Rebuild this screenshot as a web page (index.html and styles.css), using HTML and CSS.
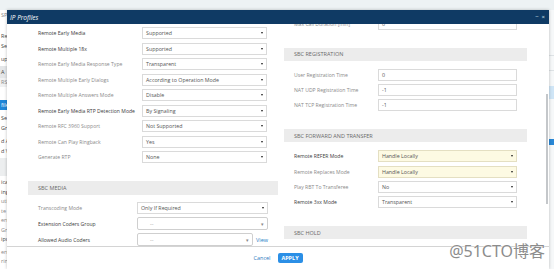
FILE: index.html
```html
<!DOCTYPE html>
<html lang="en">
<head>
    <meta charset="UTF-8">
    <meta name="viewport" content="width=device-width, initial-scale=1.0">
    <title>IP Profiles</title>
    <link rel="stylesheet" href="styles.css">
</head>
<body>
    <!-- Page behind the dialog -->
    <div class="page">
        <div class="topbar"></div>
        <div class="page-main">
            <ul class="side-menu">
                <li class="muted">SP</li>
                <li class="gap-lg"></li>
                <li>Re</li>
                <li>Set</li>
                <li class="mt3">up:</li>
                <li class="boxed mt2">A</li>
                <li class="light muted">RS</li>
                <li class="gap-md"></li>
                <li class="active">file</li>
                <li class="mt3">Se</li>
                <li>Gr</li>
                <li class="mt3">d A</li>
                <li>d V</li>
                <li class="block mt2"></li>
                <li class="sm mt2">ica</li>
                <li class="sm">ing</li>
                <li class="sm muted">uti</li>
                <li class="sm muted">te</li>
                <li class="sm muted">ern</li>
                <li class="sm muted">Gro</li>
                <li class="sm">ipu</li>
                <li class="sm muted mt3">ern</li>
                <li class="sm muted">rin</li>
            </ul>
            <div class="page-right">
                <div class="right-line"></div>
                <div class="right-line"></div>
                <div class="right-box"></div>
                <div class="right-btn"></div>
            </div>
        </div>
    </div>

    <!-- IP Profiles dialog -->
    <div class="modal">
        <div class="modal-head">
            <span class="modal-title">IP Profiles</span>
            <span class="modal-tools"><span>&minus;</span><span>&times;</span></span>
        </div>

        <div class="modal-body">
            <div class="col col-left">
                <div class="group early">
                    <div class="row"><span class="label strong">Remote Early Media</span><div class="select"><span>Supported</span><i class="caret"></i></div></div>
                    <div class="row"><span class="label strong">Remote Multiple 18x</span><div class="select"><span>Supported</span><i class="caret"></i></div></div>
                    <div class="row"><span class="label">Remote Early Media Response Type</span><div class="select"><span>Transparent</span><i class="caret"></i></div></div>
                    <div class="row"><span class="label">Remote Multiple Early Dialogs</span><div class="select"><span>According to Operation Mode</span><i class="caret"></i></div></div>
                    <div class="row"><span class="label">Remote Multiple Answers Mode</span><div class="select"><span>Disable</span><i class="caret"></i></div></div>
                    <div class="row"><span class="label strong">Remote Early Media RTP Detection Mode</span><div class="select"><span>By Signaling</span><i class="caret"></i></div></div>
                    <div class="row"><span class="label">Remote RFC 3960 Support</span><div class="select"><span>Not Supported</span><i class="caret"></i></div></div>
                    <div class="row"><span class="label">Remote Can Play Ringback</span><div class="select"><span>Yes</span><i class="caret"></i></div></div>
                    <div class="row"><span class="label">Generate RTP</span><div class="select"><span>None</span><i class="caret"></i></div></div>
                </div>

                <div class="section-head">SBC MEDIA</div>
                <div class="group media">
                    <div class="row"><span class="label">Transcoding Mode</span><div class="select"><span>Only If Required</span><i class="caret"></i></div></div>
                    <div class="row"><span class="label strong">Extension Coders Group</span><div class="select multi"><span>--</span><i class="chevron">&#9662;</i></div></div>
                    <div class="row"><span class="label strong">Allowed Audio Coders</span><div class="coder-pick"><div class="select multi"><span>--</span><i class="chevron">&#9662;</i></div><a class="view-link">View</a></div></div>
                </div>
            </div>

            <div class="col col-right">
                <div class="group reg">
                    <div class="row"><span class="label">Max Call Duration [min]</span><div class="select input"><span>0</span></div></div>
                </div>

                <div class="section-head">SBC REGISTRATION</div>
                <div class="group reg">
                    <div class="row"><span class="label">User Registration Time</span><div class="select input"><span>0</span></div></div>
                    <div class="row"><span class="label">NAT UDP Registration Time</span><div class="select input"><span>-1</span></div></div>
                    <div class="row"><span class="label">NAT TCP Registration Time</span><div class="select input"><span>-1</span></div></div>
                </div>

                <div class="section-head">SBC FORWARD AND TRANSFER</div>
                <div class="group reg">
                    <div class="row"><span class="label strong">Remote REFER Mode</span><div class="select changed"><span>Handle Locally</span><i class="caret"></i></div></div>
                    <div class="row"><span class="label">Remote Replaces Mode</span><div class="select changed"><span>Handle Locally</span><i class="caret"></i></div></div>
                    <div class="row"><span class="label">Play RBT To Transferee</span><div class="select"><span>No</span><i class="caret"></i></div></div>
                    <div class="row"><span class="label strong">Remote 3xx Mode</span><div class="select"><span>Transparent</span><i class="caret"></i></div></div>
                </div>

                <div class="section-head">SBC HOLD</div>
            </div>

            <div class="scroll-thumb"></div>
        </div>

        <div class="modal-foot">
            <a class="cancel">Cancel</a>
            <button class="apply">APPLY</button>
        </div>
    </div>

    <div class="watermark">@51CTO博客</div>
</body>
</html>
```

FILE: styles.css
```css
/* Base */
* {
    box-sizing: border-box;
}

body {
    margin: 0;
    width: 554px;
    height: 269px;
    overflow: hidden;
    position: relative;
    font-family: "Open Sans", "Noto Sans", sans-serif;
    background-color: #fff;
}

/* Page behind the dialog */
.page {
    height: 100%;
    display: flex;
    flex-direction: column;
    background-color: #f6f8f9;
}

.topbar {
    height: 10px;
    background-color: #edf2f4;
}

.page-main {
    flex: 1;
    display: flex;
    justify-content: space-between;
}

.side-menu {
    list-style: none;
    margin: 0;
    padding: 0;
    width: 8px;
    overflow: hidden;
    background-color: #fff;
    font-size: 5.5px;
    color: #444;
}

.side-menu li {
    height: 10px;
    line-height: 10px;
    white-space: nowrap;
    padding-left: 1px;
}

.side-menu li.sm {
    height: 9.5px;
    line-height: 9.5px;
}

.side-menu .muted { color: #888; }
.side-menu .gap-lg { height: 11px; }
.side-menu .gap-md { height: 13px; }
.side-menu .mt2 { margin-top: 2px; }
.side-menu .mt3 { margin-top: 3px; }

.side-menu .boxed {
    height: 12px;
    line-height: 12px;
    background-color: #e4e6e8;
}

.side-menu .light {
    height: 9px;
    line-height: 9px;
    background-color: #f0f1f2;
}

.side-menu .active {
    background-color: #1f86d8;
    color: #fff;
}

.side-menu .block {
    height: 18px;
    background-color: #eceeef;
}

.page-right {
    width: 6px;
    display: flex;
    flex-direction: column;
    padding-top: 45px;
}

.right-line {
    height: 1px;
    background-color: #dde2e5;
    margin-bottom: 14px;
}

.right-box {
    height: 13px;
    margin-top: 1px;
    background-color: #cfe5f6;
    border-left: 1px solid #a9cbe6;
}

.right-btn {
    height: 6px;
    margin-top: 40px;
    background-color: #2a88d6;
}

/* Dialog */
.modal {
    position: absolute;
    left: 7px;
    top: 10px;
    width: 542px;
    bottom: 0;
    display: flex;
    flex-direction: column;
    background-color: #fff;
    box-shadow: 0 0 3px rgba(0, 0, 0, 0.25);
}

.modal-head {
    height: 14px;
    flex-shrink: 0;
    display: flex;
    align-items: center;
    justify-content: space-between;
    padding: 0 4px 0 3px;
    background-color: #0f3a64;
    color: #fff;
}

.modal-title {
    font-style: italic;
    font-size: 6.5px;
}

.modal-tools {
    display: flex;
    gap: 3px;
    font-size: 6px;
    color: #dbe4ee;
}

.modal-body {
    flex: 1;
    position: relative;
    overflow: hidden;
    display: flex;
    gap: 6px;
    padding: 3px 22px 0 21px;
}

.col {
    display: flex;
    flex-direction: column;
}

.col-left {
    width: 250px;
}

.col-right {
    width: 243px;
    margin-top: -9px;
}

.group {
    display: flex;
    flex-direction: column;
    gap: 3.5px;
    padding-left: 10px;
}

.group.reg {
    gap: 3.3px;
}

.row {
    display: grid;
    align-items: center;
    height: 12px;
}

.early .row {
    grid-template-columns: 104px 125px;
}

.media .row {
    grid-template-columns: 99px 131px;
    height: 13px;
}

.media .row:first-child {
    height: 12px;
}

.media {
    gap: 3px;
}

.reg .row {
    grid-template-columns: 84px 139px;
}

.label {
    font-size: 5.1px;
    color: #8a8a8a;
    white-space: nowrap;
}

.label.strong {
    color: #3c3c3c;
}

.select {
    height: 12px;
    display: flex;
    align-items: center;
    justify-content: space-between;
    padding: 0 3px;
    border: 1px solid #dadada;
    background-color: #fff;
    font-size: 5.3px;
    color: #555;
    white-space: nowrap;
}

.select.changed {
    background-color: #fdfae3;
    border-color: #e4dfc2;
}

.select.multi {
    height: 13px;
    border-radius: 2px;
    border-color: #cfcfcf;
    padding: 0 3px 0 12px;
    color: #9a9a9a;
}

.caret {
    width: 0;
    height: 0;
    border-left: 1.5px solid transparent;
    border-right: 1.5px solid transparent;
    border-top: 2.5px solid #222;
}

.chevron {
    font-style: normal;
    font-size: 5px;
    color: #888;
}

.coder-pick {
    display: flex;
    align-items: center;
    gap: 3px;
}

.coder-pick .select {
    width: 116px;
}

.view-link {
    font-size: 5.5px;
    color: #2a7dc4;
}

.section-head {
    height: 14px;
    margin: 18px 0 7px;
    padding-left: 10px;
    display: flex;
    align-items: center;
    background-color: #ececec;
    font-size: 5.5px;
    color: #6a6a6a;
}

.col-right .section-head + .group .row:first-child {
    margin-top: 1px;
}

.scroll-thumb {
    position: absolute;
    right: 1px;
    top: 70px;
    width: 2px;
    height: 110px;
    background-color: #c4c7ca;
}

/* Footer */
.modal-foot {
    height: 23px;
    flex-shrink: 0;
    display: flex;
    align-items: center;
    justify-content: center;
    gap: 7px;
    border-top: 1px solid #d4d4d4;
}

.cancel {
    font-size: 5.5px;
    color: #2b7bc0;
}

.apply {
    width: 25px;
    height: 10px;
    padding: 0;
    border: none;
    border-radius: 2px;
    background-color: #2b8fe6;
    color: #fff;
    font-family: "Open Sans", "Noto Sans", sans-serif;
    font-size: 5.5px;
    font-weight: bold;
}

/* Watermark over the shot */
.watermark {
    position: absolute;
    right: 9px;
    bottom: 7px;
    font-family: "Noto Sans", "Noto Sans CJK SC", sans-serif;
    font-size: 16px;
    color: #8c8c8c;
    text-shadow: 0 0 1px #fff, 0 0 1px #fff;
}
```
